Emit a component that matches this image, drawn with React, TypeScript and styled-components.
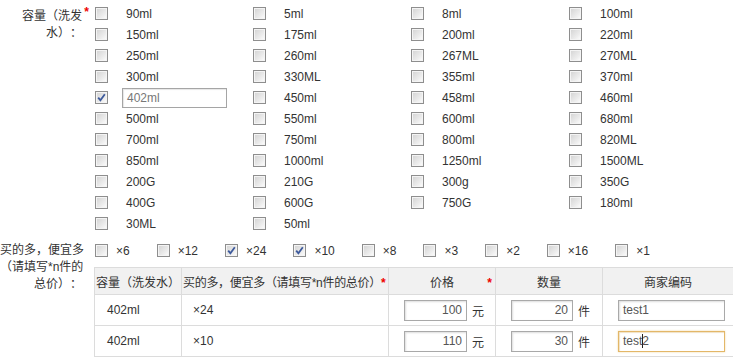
import { FC } from "react";
import styled, { createGlobalStyle } from "styled-components";

const GlobalStyle = createGlobalStyle`
  body {
    margin: 0;
    background: #fff;
    color: #333;
    font-family: "Liberation Sans", "Noto Sans CJK SC", sans-serif;
    font-size: 12px;
    overflow: hidden;
    text-spacing-trim: space-all;
  }
`;

const sizes = [
  "90ml", "5ml", "8ml", "100ml",
  "150ml", "175ml", "200ml", "220ml",
  "250ml", "260ml", "267ML", "270ML",
  "300ml", "330ML", "355ml", "370ml",
  "402ml", "450ml", "458ml", "460ml",
  "500ml", "550ml", "600ml", "680ml",
  "700ml", "750ml", "800ml", "820ML",
  "850ml", "1000ml", "1250ml", "1500ML",
  "200G", "210G", "300g", "350G",
  "400G", "600G", "750G", "180ml",
  "30ML", "50ml",
];

const multiples = [
  { label: "×6", checked: false },
  { label: "×12", checked: false },
  { label: "×24", checked: true },
  { label: "×10", checked: true },
  { label: "×8", checked: false },
  { label: "×3", checked: false },
  { label: "×2", checked: false },
  { label: "×16", checked: false },
  { label: "×1", checked: false },
];

const rows = [
  { size: "402ml", qty: "×24", price: "100", count: "20", code: "test1", focused: false },
  { size: "402ml", qty: "×10", price: "110", count: "30", code: "test2", focused: true },
];

const Page = styled.div`
  padding-top: 3px;
  width: 733px;
`;

const Field = styled.div<{ $gap?: number }>`
  display: flex;
  align-items: flex-start;
  margin-top: ${(p) => p.$gap ?? 0}px;
`;

const Label = styled.div<{ $top?: number }>`
  width: 82px;
  flex: none;
  padding-top: ${(p) => p.$top ?? 0}px;
  margin-right: 13px;
  text-align: right;
  line-height: 17px;
  white-space: nowrap;
  position: relative;
`;

const Line = styled.div<{ $pad?: number }>`
  padding-right: ${(p) => p.$pad ?? 0}px;
`;

const Star = styled.span`
  color: #e00;
  font-weight: bold;
`;

const LabelStar = styled(Star)`
  position: absolute;
  right: -7px;
  top: 3px;
  line-height: 12px;
`;

const OptionGrid = styled.div`
  display: grid;
  grid-template-columns: repeat(4, 158px);
  grid-auto-rows: 21px;
`;

const Option = styled.label`
  display: flex;
  align-items: center;
  gap: 18px;
`;

const Box = styled.span`
  width: 11px;
  height: 11px;
  flex: none;
  border: 1px solid #8e8e8e;
  background: linear-gradient(135deg, #d2d2d2 0%, #ededed 65%, #fff 100%);
  box-shadow: inset 0 0 0 1px #f4f4f4;
  display: flex;
  align-items: center;
  justify-content: center;
`;

const EditBox = styled.span`
  width: 99px;
  height: 18px;
  margin-left: -4px;
  padding-left: 4px;
  border: 1px solid #a5a5a5;
  box-shadow: inset 1px 1px 1px #e6e6e6;
  color: #777;
  line-height: 18px;
`;

const Content = styled.div`
  display: flex;
  flex-direction: column;
`;

const MultiRow = styled.div`
  display: flex;
  align-items: center;
  height: 21px;
  margin-bottom: 6px;
`;

const Multi = styled.label`
  display: flex;
  align-items: center;
  gap: 8px;
  margin-right: 27px;
`;

const Table = styled.table`
  border-collapse: collapse;
  table-layout: fixed;
  width: 638px;
  margin-left: -1px;
`;

const Th = styled.th<{ $w: number; $tight?: boolean }>`
  width: ${(p) => p.$w}px;
  height: 26px;
  padding: 0 1px;
  background: #f1f1f1;
  border: 1px solid #dcdcdc;
  font-weight: normal;
  text-align: ${(p) => (p.$tight ? "left" : "center")};
  letter-spacing: ${(p) => (p.$tight ? "-0.3px" : "0")};
  white-space: nowrap;
  overflow: hidden;
  position: relative;
`;

const ThStar = styled(Star)`
  position: absolute;
  right: 3px;
  top: 9px;
  line-height: 12px;
`;

const Td = styled.td<{ $pad?: number }>`
  height: 30px;
  padding: 0 0 0 ${(p) => p.$pad ?? 0}px;
  border: 1px solid #dcdcdc;
  white-space: nowrap;
`;

const Cell = styled.div`
  display: flex;
  align-items: center;
  gap: 5px;
`;

const Input = styled.span<{ $w: number; $align?: string; $focus?: boolean }>`
  display: block;
  box-sizing: border-box;
  width: ${(p) => p.$w}px;
  height: 21px;
  line-height: 19px;
  padding: 0 4px;
  border: 1px solid ${(p) => (p.$focus ? "#e3b768" : "#a9a9a9")};
  box-shadow: ${(p) =>
    p.$focus ? "0 0 2px #f2d9a8, inset 1px 1px 1px #f0e2c6" : "inset 1px 1px 2px #dedede"};
  text-align: ${(p) => p.$align ?? "left"};
  color: #555;
`;

const Caret = styled.span`
  display: inline-block;
  width: 1px;
  height: 14px;
  background: #222;
  vertical-align: -3px;
  margin-right: -1px;
`;

const Check: FC<{ checked: boolean }> = ({ checked }) => (
  <Box>
    {checked && (
      <svg width="9" height="9" viewBox="0 0 9 9">
        <path d="M1.2 4.6 L3.4 7.2 L7.8 1.2" fill="none" stroke="#3d5a9c" strokeWidth="1.8" />
      </svg>
    )}
  </Box>
);

export default function App() {
  return (
    <Page>
      <GlobalStyle />
      <Field>
        <Label $top={5}>
          <Line>容量（洗发</Line>
          <Line>水）：</Line>
          <LabelStar>*</LabelStar>
        </Label>
        <OptionGrid>
          {sizes.map((s) => (
            <Option key={s}>
              <Check checked={s === "402ml"} />
              {s === "402ml" ? <EditBox>{s}</EditBox> : <span>{s}</span>}
            </Option>
          ))}
        </OptionGrid>
      </Field>
      <Field $gap={6}>
        <Label $top={2}>
          <Line>买的多，便宜多</Line>
          <Line>（请填写*n件的</Line>
          <Line>总价）：</Line>
        </Label>
        <Content>
          <MultiRow>
            {multiples.map((m) => (
              <Multi key={m.label}>
                <Check checked={m.checked} />
                <span>{m.label}</span>
              </Multi>
            ))}
          </MultiRow>
          <Table>
            <thead>
              <tr>
                <Th $w={84}>容量（洗发水）</Th>
                <Th $w={204} $tight>
                  买的多，便宜多（请填写*n件的总价）<Star>*</Star>
                </Th>
                <Th $w={104}>
                  价格<ThStar>*</ThStar>
                </Th>
                <Th $w={104}>数量</Th>
                <Th $w={128}>商家编码</Th>
              </tr>
            </thead>
            <tbody>
              {rows.map((r, i) => (
                <tr key={i}>
                  <Td $pad={12}>{r.size}</Td>
                  <Td $pad={11}>{r.qty}</Td>
                  <Td $pad={15}>
                    <Cell>
                      <Input $w={63} $align="right">{r.price}</Input>元
                    </Cell>
                  </Td>
                  <Td $pad={15}>
                    <Cell>
                      <Input $w={62} $align="right">{r.count}</Input>件
                    </Cell>
                  </Td>
                  <Td $pad={15}>
                    <Input $w={107} $focus={r.focused}>
                      {r.focused ? (
                        <>
                          test
                          <Caret />2
                        </>
                      ) : (
                        r.code
                      )}
                    </Input>
                  </Td>
                </tr>
              ))}
            </tbody>
          </Table>
        </Content>
      </Field>
    </Page>
  );
}
